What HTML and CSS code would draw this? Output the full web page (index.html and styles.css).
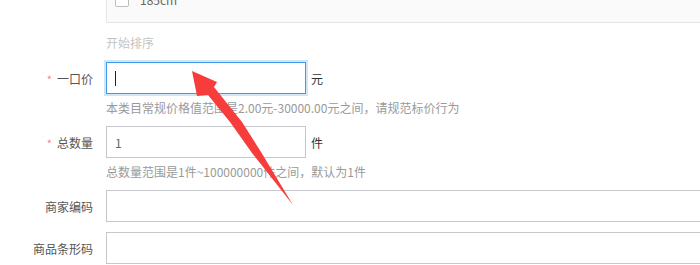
FILE: index.html
```html
<!DOCTYPE html>
<html lang="zh-CN">
<head>
<meta charset="utf-8">
<title>商品发布</title>
<link rel="stylesheet" href="styles.css">
</head>
<body>
<div class="page">
  <div class="panel">
    <div class="opt"><span class="checkbox"></span><span class="opt-text">185cm</span></div>
  </div>
  <div class="sort-link">开始排序</div>

  <div class="row">
    <div class="label"><span class="star">*</span>一口价</div>
    <div class="field">
      <div class="input focus"><span class="caret"></span></div>
      <span class="unit">元</span>
    </div>
  </div>
  <div class="hint">本类目常规价格值范围是2.00元-30000.00元之间，请规范标价行为</div>

  <div class="row">
    <div class="label"><span class="star">*</span>总数量</div>
    <div class="field">
      <div class="input">1</div>
      <span class="unit">件</span>
    </div>
  </div>
  <div class="hint">总数量范围是1件~100000000件之间，默认为1件</div>

  <div class="row gap-below">
    <div class="label">商家编码</div>
    <div class="field"><div class="input wide"></div></div>
  </div>

  <div class="row">
    <div class="label">商品条形码</div>
    <div class="field"><div class="input wide"></div></div>
  </div>

  <svg class="arrow" width="700" height="265" viewBox="0 0 700 265" aria-hidden="true">
    <polygon points="192,89 217,100 214,105 242,140 261,170 293,223 252,171 230,140 208,113 197,114" fill="#f73c3c"/>
  </svg>
</div>
</body>
</html>
```

FILE: styles.css
```css
html, body {
  margin: 0;
  padding: 0;
  overflow: hidden;
  background: #fff;
}

body {
  font-family: "Noto Sans CJK SC", "Microsoft YaHei", sans-serif;
  font-size: 12px;
  color: #555;
}

.page {
  position: relative;
  width: 1000px;
}

.panel {
  margin: -18px 0 0 106px;
  border: 1px solid #e6e6e6;
  background: #fafafa;
  padding: 10px 8px 15px;
}

.opt {
  display: flex;
  align-items: center;
  gap: 11px;
  height: 14px;
}

.checkbox {
  width: 14px;
  height: 14px;
  box-sizing: border-box;
  border: 1px solid #bdbdbd;
  border-radius: 2px;
  background: #fff;
}

.opt-text {
  color: #666;
  line-height: 14px;
}

.sort-link {
  margin: 10px 0 9px 106px;
  line-height: 20px;
  color: #c4c4c4;
}

.row {
  display: grid;
  grid-template-columns: 93px auto;
  column-gap: 13px;
  align-items: center;
}

.row.gap-below {
  margin-bottom: 10px;
}

.label {
  text-align: right;
  white-space: nowrap;
  color: #555;
}

.star {
  color: #f78989;
  font-size: 11px;
  margin-right: 5px;
}

.field {
  display: flex;
  align-items: center;
}

.input {
  width: 200px;
  height: 32px;
  box-sizing: border-box;
  border: 1px solid #c6c7cd;
  background: #fff;
  padding-left: 8px;
  display: flex;
  align-items: center;
  color: #666;
}

.input.wide {
  width: 700px;
}

.input.focus {
  border-color: #3d9be9;
  box-shadow: 0 0 0 2px #cfe6f8;
}

.caret {
  width: 1px;
  height: 15px;
  background: #222;
}

.unit {
  margin-left: 5px;
  color: #333;
}

.hint {
  margin: 4px 0 8px 106px;
  line-height: 20px;
  color: #9a9a9a;
  white-space: nowrap;
}

.arrow {
  position: absolute;
  top: 0;
  left: 0;
  pointer-events: none;
}
```
